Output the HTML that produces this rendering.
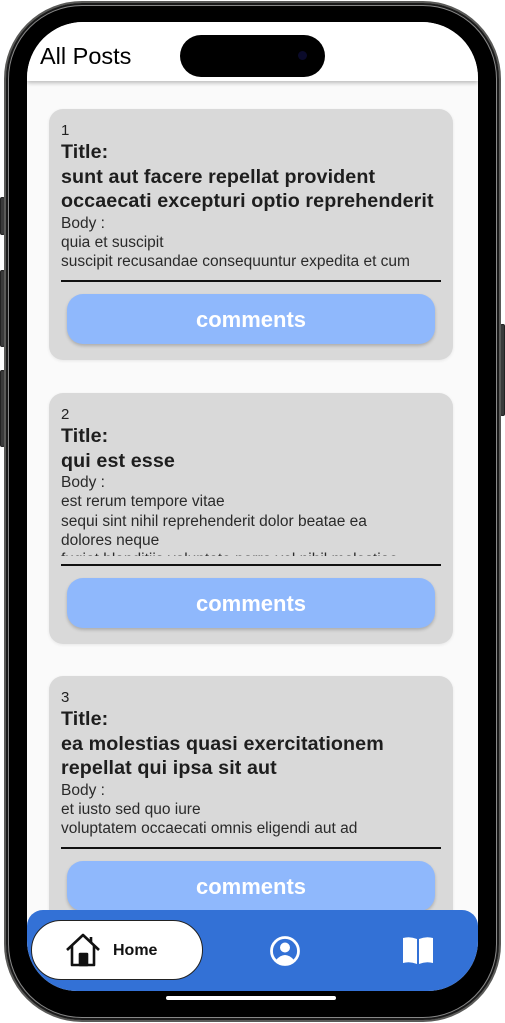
<!DOCTYPE html>
<html><head><style>
*{margin:0;padding:0;box-sizing:border-box}
body{width:505px;height:1023px;background:#fff;position:relative;overflow:hidden;font-family:"Liberation Sans",sans-serif}
.abs{position:absolute}
.frame{left:4px;top:1px;width:497px;height:1021px;border-radius:78px;background:#000;border:2px solid #5a5a58;box-shadow:inset 0 0 0 2px #1a1a1a, inset 0 0 0 3px #888}
.btn{background:#3a3a3a;border:1px solid #222;border-radius:2px}
.screen{left:27px;top:22px;width:451px;height:969px;border-radius:56px 56px 50px 50px;background:#fafafa;overflow:hidden}
.header{left:0;top:0;width:451px;height:59px;background:#fff;box-shadow:0 2px 4px rgba(0,0,0,.25)}
.card{left:22px;width:404px;height:251px;background:#d9d9d9;border-radius:14px;box-shadow:0 1px 3px rgba(0,0,0,.08)}
.txt{left:12px;width:385px;color:#222}
.num{font-size:15px;line-height:19px}
.ttl{font-size:19.7px;font-weight:bold;line-height:24.5px;color:#1e1e1e;letter-spacing:0.1px}
.bd{font-size:15.5px;line-height:19.3px;color:#2a2a2a;width:372px}
.div{left:12px;width:380px;height:2px;background:#111}
.cbtn{left:18px;width:368px;height:50px;background:#8fb8fc;border-radius:16px;color:#fff;font-weight:bold;font-size:22px;text-align:center;line-height:52px;box-shadow:0 2px 3px rgba(0,0,0,.2)}
</style></head><body>
<div class="abs btn" style="left:0;top:197px;width:5px;height:38px"></div>
<div class="abs btn" style="left:0;top:270px;width:5px;height:77px"></div>
<div class="abs btn" style="left:0;top:370px;width:5px;height:77px"></div>
<div class="abs btn" style="left:500px;top:324px;width:5px;height:92px"></div>
<div class="abs frame"></div>
<div class="abs screen">
  <div class="abs header"><div class="abs" style="left:13px;top:21px;font-size:23.5px;color:#000">All Posts</div></div>

  <div class="abs card" style="top:87px">
    <div class="abs txt" style="top:12px">
      <div class="num">1</div>
      <div class="ttl">Title:</div>
      <div class="ttl">sunt aut facere repellat provident occaecati excepturi optio reprehenderit</div>
      <div class="bd">Body :</div>
      <div class="bd">quia et suscipit<br>suscipit recusandae consequuntur expedita et cum</div>
    </div>
    <div class="abs div" style="top:171px"></div>
    <div class="abs cbtn" style="top:185px">comments</div>
  </div>

  <div class="abs card" style="top:371px">
    <div class="abs txt" style="top:12px;height:151px;overflow:hidden">
      <div class="num">2</div>
      <div class="ttl">Title:</div>
      <div class="ttl">qui est esse</div>
      <div class="bd">Body :</div>
      <div class="bd">est rerum tempore vitae<br>sequi sint nihil reprehenderit dolor beatae ea<br>dolores neque<br>fugiat blanditiis voluptate porro vel nihil molestiae</div>
    </div>
    <div class="abs div" style="top:171px"></div>
    <div class="abs cbtn" style="top:185px">comments</div>
  </div>

  <div class="abs card" style="top:654px">
    <div class="abs txt" style="top:12px">
      <div class="num">3</div>
      <div class="ttl">Title:</div>
      <div class="ttl">ea molestias quasi exercitationem repellat qui ipsa sit aut</div>
      <div class="bd">Body :</div>
      <div class="bd">et iusto sed quo iure<br>voluptatem occaecati omnis eligendi aut ad</div>
    </div>
    <div class="abs div" style="top:171px"></div>
    <div class="abs cbtn" style="top:185px">comments</div>
  </div>

  <div class="abs" style="left:0;top:888px;width:451px;height:90px;background:#3371d6;border-radius:16px 16px 0 0"></div>
  <div class="abs" style="left:4px;top:898px;width:172px;height:60px;background:#fff;border:1.5px solid #222;border-radius:30px">
    <svg class="abs" style="left:33px;top:11px" width="36" height="36" viewBox="0 0 36 36" fill="none" stroke="#111" stroke-width="2.6" stroke-linejoin="round">
      <path d="M2 18 L18 3 L34 18"/><path d="M7 14 V33 H29 V14"/><path d="M26 5 V11"/>
      <rect x="15" y="22" width="7" height="11" fill="#111"/>
    </svg>
    <div class="abs" style="left:81px;top:21px;font-size:16px;font-weight:bold;color:#111">Home</div>
  </div>
  <svg class="abs" style="left:242px;top:913px" width="32" height="32" viewBox="0 0 32 32">
    <circle cx="16" cy="16" r="13.5" fill="none" stroke="#fff" stroke-width="2.8"/>
    <circle cx="16" cy="12.5" r="5" fill="#fff"/>
    <path d="M7 25 Q16 15 25 25 Q16 32 7 25Z" fill="#fff"/>
  </svg>
  <svg class="abs" style="left:375px;top:914px" width="32" height="30" viewBox="0 0 32 30">
    <path d="M1 2 Q8 0 15 3 V28 Q8 25 1 27Z" fill="#fff"/>
    <path d="M31 2 Q24 0 17 3 V28 Q24 25 31 27Z" fill="#fff"/>
  </svg>
</div>
<div class="abs" style="left:180px;top:35px;width:145px;height:42px;background:#000;border-radius:21px"></div>
<div class="abs" style="left:298px;top:51px;width:9px;height:9px;background:#0a0a2a;border-radius:50%"></div>
<div class="abs" style="left:166px;top:996px;width:170px;height:4px;background:#fff;border-radius:2px"></div>
</body></html>
